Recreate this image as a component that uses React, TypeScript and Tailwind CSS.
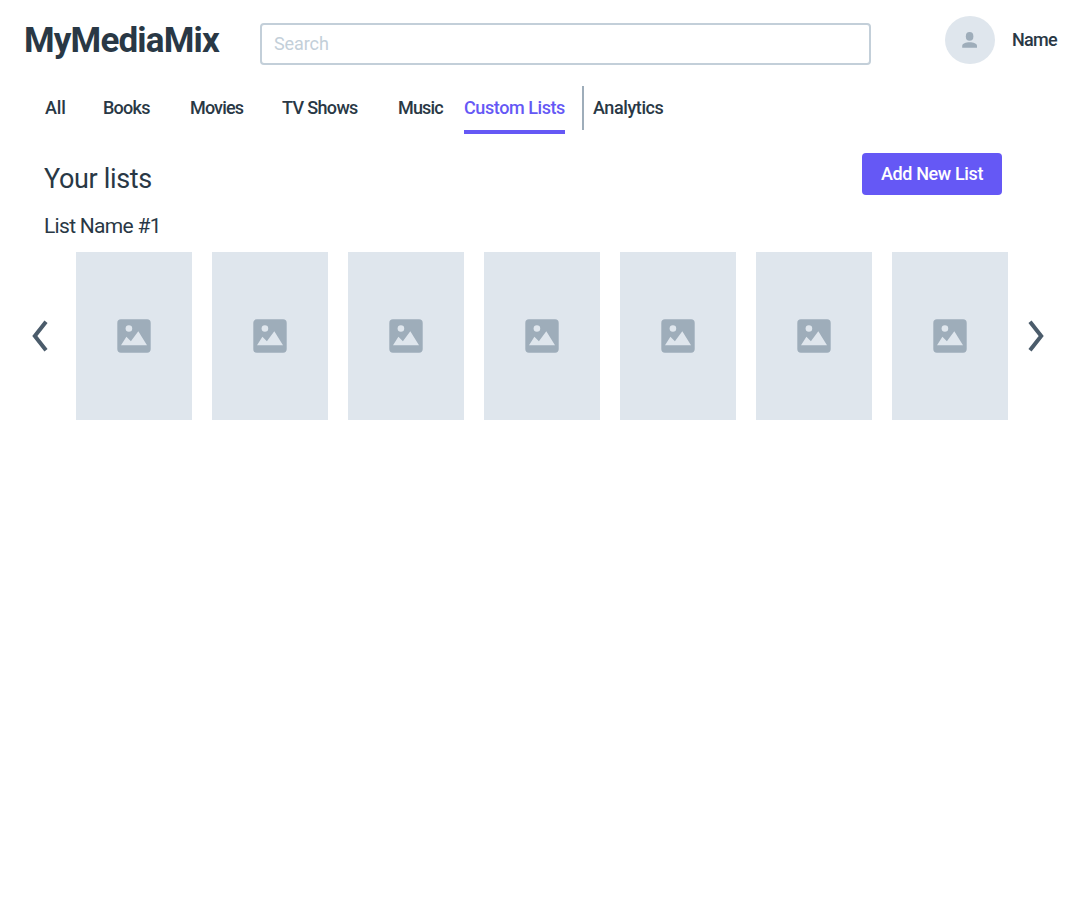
import React from 'react';

const navItems = [
  { label: 'All', style: 'ml-[45px] w-[58px] tracking-[-0.1px]' },
  { label: 'Books', style: 'w-[87px] tracking-[-0.75px]' },
  { label: 'Movies', style: 'w-[92px] tracking-[-0.85px]' },
  { label: 'TV Shows', style: 'w-[116px] tracking-[-0.65px]' },
  { label: 'Music', style: 'w-[66px] tracking-[-0.85px]' },
];

const items = [1, 2, 3, 4, 5, 6, 7];

function ImageIcon() {
  return (
    <svg width="34" height="34" viewBox="0 0 34 34" aria-hidden="true">
      <rect x="0.3" y="0.3" width="33.4" height="33.4" rx="3.7" fill="#9eadba" />
      <circle cx="11.9" cy="9.5" r="3.3" fill="#dfe6ed" />
      <path d="M4 26.3 9.4 17.7 13.9 22.3 21.3 12.2 30 26.3Z" fill="#dfe6ed" />
    </svg>
  );
}

function Chevron({ direction }: { direction: 'left' | 'right' }) {
  return (
    <button aria-label={direction} className="h-8 w-4 shrink-0">
      <svg width="16" height="32" viewBox="0 0 16 32" fill="none" stroke="#4b5c6b" strokeWidth="4">
        <path d={direction === 'left' ? 'M14 1.7 2.8 16 14 30.3' : 'M2 1.7 13.2 16 2 30.3'} />
      </svg>
    </button>
  );
}

export default function App() {
  return (
    <div className="min-h-[924px] w-[1080px] overflow-hidden bg-white font-['Roboto','Liberation_Sans',sans-serif] font-medium whitespace-nowrap text-[#293845]">
      <header className="flex h-20 items-center">
        <h1 className="ml-6 w-[236px] pt-0.5 text-[35px] leading-10 font-bold tracking-[-0.83px]">MyMediaMix</h1>
        <input
          aria-label="Search"
          placeholder="Search"
          className="mt-2 h-[42px] w-[611px] rounded-[4px] border-2 border-[#c3cfd9] px-3 pb-0.5 text-[18px] font-normal tracking-[-0.1px] outline-none placeholder:text-[#c3cfd9]"
        />
        <div className="ml-[74px] flex h-12 w-[50px] items-center justify-center rounded-[50%] bg-[#dfe6ed]">
          <svg width="16" height="16" viewBox="0 0 16 16" fill="#9eadba" aria-hidden="true">
            <ellipse cx="7.6" cy="4.4" rx="3.8" ry="4.3" />
            <path d="M0.2 15.8V14C0.2 11.4 3.8 10.3 7.6 10.3S15 11.4 15 14V15.8Z" />
          </svg>
        </div>
        <span className="ml-[17px] text-[18px] leading-6 tracking-[-0.7px]">Name</span>
      </header>
      <nav className="flex h-[54px] items-start pt-1.5 text-[18px] leading-[44px]">
        {navItems.map((item) => (
          <a key={item.label} className={item.style}>{item.label}</a>
        ))}
        <a className="h-12 w-[101px] border-b-4 border-[#6558f5] tracking-[-0.42px] text-[#6558f5]">Custom Lists</a>
        <div className="ml-[17px] h-11 w-0.5 bg-[#9eadba]" />
        <a className="ml-[9px] tracking-[-0.42px]">Analytics</a>
      </nav>
      <main>
        <div className="flex h-[61px] items-start justify-between pt-[19px] pr-[78px] pl-11">
          <h2 className="pt-[5px] text-[27px] leading-[42px] font-[450] tracking-[-0.35px]">Your lists</h2>
          <button className="h-[42px] w-[140px] rounded-[4px] bg-[#6558f5] pb-0.5 text-[18px] tracking-[-0.37px] text-white">Add New List</button>
        </div>
        <h3 className="mt-4 ml-11 text-[21px] leading-[30px] font-[450] tracking-[-0.7px]">List Name #1</h3>
        <div className="mt-[11px] flex items-center pl-8">
          <Chevron direction="left" />
          <div className="mr-5 ml-7 flex gap-5">
            {items.map((item) => (
              <div key={item} className="flex h-[168px] w-[116px] items-center justify-center bg-[#dfe6ed]">
                <ImageIcon />
              </div>
            ))}
          </div>
          <Chevron direction="right" />
        </div>
      </main>
    </div>
  );
}
